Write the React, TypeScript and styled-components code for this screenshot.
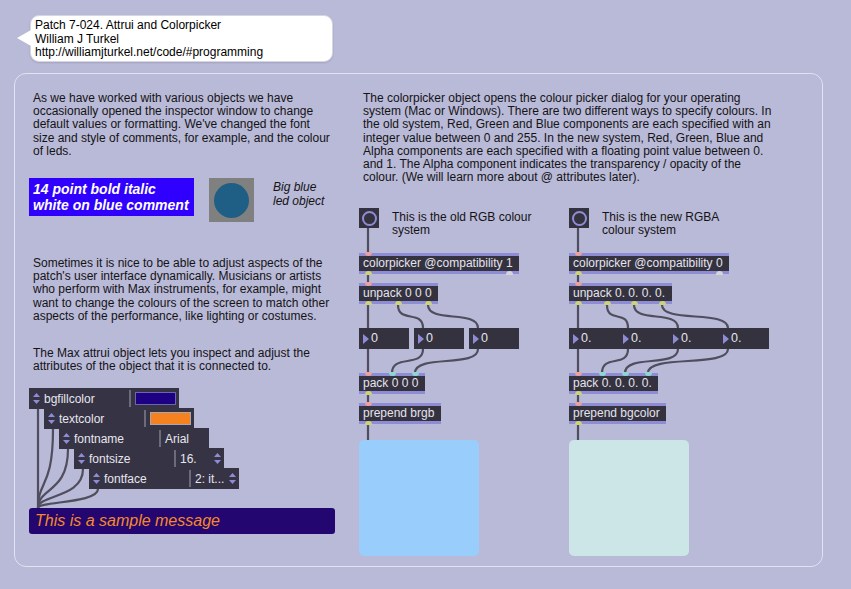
import React from 'react'
import styled, { createGlobalStyle } from 'styled-components'

const GlobalStyle = createGlobalStyle`
  html, body {
    margin: 0;
    padding: 0;
    background: #b9b9d8;
  }
  body {
    font-family: 'Liberation Sans', Arial, sans-serif;
    font-size: 12px;
    color: #141414;
  }
`

const LAV = '#8f8cd6'
const DARK = '#34323f'
const CORD = '#4f4e5e'

const Page = styled.div`
  width: 851px;
  height: 589px;
  overflow: hidden;
  padding-top: 15px;
  box-sizing: border-box;
`

const Bubble = styled.div`
  position: relative;
  margin-left: 30px;
  width: 303px;
  height: 47px;
  box-sizing: border-box;
  padding: 3px 4px 0;
  background: #fff;
  border: 1px solid #d6d6e2;
  border-radius: 9px;
  box-shadow: 0 1px 2px rgba(0, 0, 0, 0.12);
  line-height: 13.5px;
  color: #000;

  &::before {
    content: '';
    position: absolute;
    left: -14px;
    top: 14px;
    border-right: 14px solid #fff;
    border-top: 8px solid transparent;
    border-bottom: 8px solid transparent;
  }
`

const Panel = styled.div`
  margin: 11px 0 0 14px;
  width: 809px;
  height: 494px;
  box-sizing: border-box;
  border: 1px solid #e2e2f0;
  border-radius: 12px;
  padding: 18px 0 0 14px;
  display: flex;
`

const LeftCol = styled.div`
  width: 330px;
  display: flex;
  flex-direction: column;
`

const RightCol = styled.div`
  display: flex;
  flex-direction: column;
`

const Para = styled.p<{ $width: number; $top?: number }>`
  margin: ${(p) => p.$top || 0}px 0 0 0;
  padding-left: 4px;
  width: ${(p) => p.$width}px;
  line-height: 13.2px;
`

const CommentRow = styled.div`
  display: flex;
  align-items: flex-start;
  margin-top: 20px;
`

const BlueComment = styled.div`
  width: 165px;
  height: 38px;
  box-sizing: border-box;
  padding: 3px 4px;
  background: #3000ff;
  color: #fff;
  font-size: 14px;
  font-weight: bold;
  font-style: italic;
  line-height: 16px;
`

const LedBox = styled.div`
  margin-left: 15px;
  width: 45px;
  height: 44px;
  background: #808080;
  display: flex;
  align-items: center;
  justify-content: center;
`

const LedLight = styled.div`
  width: 35px;
  height: 35px;
  border-radius: 50%;
  background: #1f5f85;
`

const LedCaption = styled.div`
  margin-left: 19px;
  padding-top: 2px;
  font-style: italic;
  line-height: 14px;
`

/* patch canvas: nodes sit at their patcher coordinates */
const Canvas = styled.div<{ $w: number; $h: number; $top?: number }>`
  position: relative;
  width: ${(p) => p.$w}px;
  height: ${(p) => p.$h}px;
  margin-top: ${(p) => p.$top || 0}px;
  flex-shrink: 0;
`

const Cords = styled.svg`
  position: absolute;
  left: 0;
  top: 0;
  overflow: visible;
  pointer-events: none;
`

const Node = styled.div<{ $x: number; $y: number }>`
  position: absolute;
  left: ${(p) => p.$x}px;
  top: ${(p) => p.$y}px;
`

const ObjBox = styled(Node)<{ $w: number }>`
  width: ${(p) => p.$w}px;
  height: 21px;
  box-sizing: border-box;
  background: ${DARK};
  border-top: 3px solid ${LAV};
  border-bottom: 3px solid ${LAV};
  color: #e4e4ee;
  line-height: 15px;
  padding: 0 4px;
  white-space: nowrap;
`

const Port = styled.span<{ $x: number; $kind: 'hot' | 'cold' | 'out' | 'grey' }>`
  position: absolute;
  left: ${(p) => p.$x - 3}px;
  width: 7px;
  height: 4px;
  background: ${(p) =>
    p.$kind === 'hot' ? '#e9a2a0' : p.$kind === 'cold' ? '#8fd6d2' : p.$kind === 'out' ? '#cbd27a' : '#d4d4dc'};
  ${(p) =>
    p.$kind === 'out' || p.$kind === 'grey'
      ? 'bottom: -4px; border-radius: 4px 4px 0 0;'
      : 'top: -4px; border-radius: 0 0 4px 4px;'}
`

const NumBox = styled(Node)<{ $w: number }>`
  width: ${(p) => p.$w}px;
  height: 21px;
  background: ${DARK};
  color: #e4e4ee;
  display: flex;
  align-items: center;
  line-height: 21px;
  font-size: 12.5px;
`

const NumArrow = styled.span`
  margin: 0 2px 0 4px;
  width: 0;
  height: 0;
  border-left: 6px solid ${LAV};
  border-top: 5px solid transparent;
  border-bottom: 5px solid transparent;
`

const Toggle = styled(Node)`
  width: 20px;
  height: 20px;
  background: ${DARK};
  display: flex;
  align-items: center;
  justify-content: center;
`

const ToggleRing = styled.div`
  width: 11px;
  height: 11px;
  border-radius: 50%;
  border: 2px solid ${LAV};
`

const PatchNote = styled(Node)<{ $w: number }>`
  width: ${(p) => p.$w}px;
  line-height: 13px;
`

const Swatch = styled(Node)<{ $color: string }>`
  width: 120px;
  height: 116px;
  border-radius: 5px;
  background: ${(p) => p.$color};
`

const PatchRow = styled.div`
  display: flex;
  gap: 10px;
  margin-top: 24px;
`

const AttrBox = styled(Node)`
  width: 150px;
  height: 21px;
  background: #363444;
  color: #e6e6ef;
  display: flex;
  align-items: center;
`

const AttrLabel = styled.span`
  width: 85px;
  margin-left: 4px;
`

const AttrDivider = styled.span`
  width: 2px;
  height: 17px;
  background: #6c6b7c;
`

const AttrValue = styled.span`
  flex: 1;
  display: flex;
  align-items: center;
  justify-content: space-between;
  padding: 0 3px 0 4px;
`

const ColorChip = styled.span<{ $color: string; $edge: string }>`
  width: 41px;
  height: 13px;
  box-sizing: border-box;
  border: 1px solid ${(p) => p.$edge};
  background: ${(p) => p.$color};
`

const Message = styled(Node)`
  width: 306px;
  height: 26px;
  box-sizing: border-box;
  border-radius: 3px;
  background: #23066f;
  color: #f5892a;
  font-size: 16px;
  font-style: italic;
  line-height: 26px;
  padding-left: 6px;
`

const Updown: React.FC<{ left?: number }> = ({ left = 4 }) => (
  <svg width="7" height="11" viewBox="0 0 7 11" style={{ marginLeft: left, flexShrink: 0 }}>
    <path d="M3.5 0 L7 4 L0 4 Z M0 7 L7 7 L3.5 11 Z" fill={LAV} />
  </svg>
)

const cord = (x1: number, y1: number, x2: number, y2: number) => {
  if (x1 === x2) return `M${x1} ${y1} V${y2}`
  const d = (y2 - y1) * 0.8
  return `M${x1} ${y1} C${x1} ${y1 + d} ${x2} ${y2 - d} ${x2} ${y2}`
}

type PatchProps = {
  note: string
  noteWidth: number
  compat: string
  unpack: string
  unpackW: number
  outlets: number[]
  nums: { x: number; w: number; label: string }[]
  pack: string
  packW: number
  inlets: number[]
  prepend: string
  prependW: number
  color: string
}

const ColourPatch: React.FC<PatchProps> = (p) => {
  const numIns = p.nums.map((n) => n.x + 9)
  const paths = [
    cord(9, 20, 9, 45),
    cord(9, 66, 9, 75),
    ...p.outlets.map((o, i) => cord(o, 97, numIns[i], 120)),
    ...numIns.map((n, i) => cord(n, 141, p.inlets[i], 165)),
    cord(9, 186, 9, 195),
    cord(9, 216, 9, 232),
  ]
  return (
    <Canvas $w={200} $h={348}>
      <Cords width="200" height="348">
        {paths.map((d, i) => (
          <path key={i} d={d} stroke={CORD} strokeWidth={2.2} fill="none" />
        ))}
      </Cords>
      <Toggle $x={0} $y={0}>
        <ToggleRing />
      </Toggle>
      <PatchNote $x={33} $y={3} $w={p.noteWidth}>
        {p.note}
      </PatchNote>
      <ObjBox $x={0} $y={45} $w={160}>
        <Port $x={9} $kind="hot" />
        colorpicker @compatibility {p.compat}
        <Port $x={9} $kind="out" />
        <Port $x={150} $kind="grey" />
      </ObjBox>
      <ObjBox $x={0} $y={75} $w={p.unpackW}>
        <Port $x={9} $kind="hot" />
        {p.unpack}
        {p.outlets.map((o) => (
          <Port key={o} $x={o} $kind="out" />
        ))}
      </ObjBox>
      {p.nums.map((n) => (
        <NumBox key={n.x} $x={n.x} $y={120} $w={n.w}>
          <NumArrow />
          {n.label}
        </NumBox>
      ))}
      <ObjBox $x={0} $y={165} $w={p.packW}>
        {p.inlets.map((x, i) => (
          <Port key={x} $x={x} $kind={i === 0 ? 'hot' : 'cold'} />
        ))}
        {p.pack}
        <Port $x={9} $kind="out" />
      </ObjBox>
      <ObjBox $x={0} $y={195} $w={p.prependW}>
        <Port $x={9} $kind="hot" />
        {p.prepend}
        <Port $x={9} $kind="out" />
      </ObjBox>
      <Swatch $x={0} $y={232} $color={p.color} />
    </Canvas>
  )
}

const attrRows = [
  { label: 'bgfillcolor', value: <ColorChip $color="#1e0082" $edge="#6a66b0" /> },
  { label: 'textcolor', value: <ColorChip $color="#f5821f" $edge="#a8a8b4" /> },
  { label: 'fontname', value: <span>Arial</span> },
  {
    label: 'fontsize',
    value: (
      <>
        <span>16.</span>
        <Updown left={0} />
      </>
    ),
  },
  {
    label: 'fontface',
    value: (
      <>
        <span>2: it...</span>
        <Updown left={0} />
      </>
    ),
  },
]

const AttruiPatch: React.FC = () => {
  const paths = attrRows.map((_, i) => {
    const x = 9 + i * 15
    const y = 21 + i * 20
    if (i === 0) return `M9 ${y} V120`
    return `M${x} ${y} C${x} ${y + (120 - y) * 0.75} 9 ${120 - (120 - y) * 0.35} 9 120`
  })
  return (
    <Canvas $w={310} $h={146} $top={15}>
      <Cords width="310" height="146">
        {paths.map((d, i) => (
          <path key={i} d={d} stroke={CORD} strokeWidth={2.2} fill="none" />
        ))}
      </Cords>
      {attrRows.map((r, i) => (
        <AttrBox key={r.label} $x={i * 15} $y={i * 20}>
          <Updown />
          <AttrLabel>{r.label}</AttrLabel>
          <AttrDivider />
          <AttrValue>{r.value}</AttrValue>
        </AttrBox>
      ))}
      <Message $x={0} $y={120}>
        This is a sample message
      </Message>
    </Canvas>
  )
}

const App: React.FC = () => (
  <Page>
    <GlobalStyle />
    <Bubble>
      Patch 7-024. Attrui and Colorpicker
      <br />
      William J Turkel
      <br />
      http://williamjturkel.net/code/#programming
    </Bubble>
    <Panel>
      <LeftCol>
        <Para $width={300}>
          As we have worked with various objects we have occasionally opened the inspector window to change default
          values or formatting. We've changed the font size and style of comments, for example, and the colour of leds.
        </Para>
        <CommentRow>
          <BlueComment>
            14 point bold italic
            <br />
            white on blue comment
          </BlueComment>
          <LedBox>
            <LedLight />
          </LedBox>
          <LedCaption>
            Big blue
            <br />
            led object
          </LedCaption>
        </CommentRow>
        <Para $width={300} $top={35}>
          Sometimes it is nice to be able to adjust aspects of the patch's user interface dynamically. Musicians or
          artists who perform with Max instruments, for example, might want to change the colours of the screen to
          match other aspects of the performance, like lighting or costumes.
        </Para>
        <Para $width={300} $top={24}>
          The Max attrui object lets you inspect and adjust the attributes of the object that it is connected to.
        </Para>
        <AttruiPatch />
      </LeftCol>
      <RightCol>
        <Para $width={414}>
          The colorpicker object opens the colour picker dialog for your operating system (Mac or Windows). There are
          two different ways to specify colours. In the old system, Red, Green and Blue components are each specified
          with an integer value between 0 and 255. In the new system, Red, Green, Blue and Alpha components are each
          specified with a floating point value between 0. and 1. The Alpha component indicates the transparency /
          opacity of the colour. (We will learn more about @ attributes later).
        </Para>
        <PatchRow>
          <ColourPatch
            note="This is the old RGB colour system"
            noteWidth={145}
            compat="1"
            unpack="unpack 0 0 0"
            unpackW={79}
            outlets={[9, 39, 69]}
            nums={[
              { x: 0, w: 50, label: '0' },
              { x: 55, w: 50, label: '0' },
              { x: 110, w: 50, label: '0' },
            ]}
            pack="pack 0 0 0"
            packW={66}
            inlets={[9, 33, 56]}
            prepend="prepend brgb"
            prependW={82}
            color="#99cdfb"
          />
          <ColourPatch
            note="This is the new RGBA colour system"
            noteWidth={125}
            compat="0"
            unpack="unpack 0. 0. 0. 0."
            unpackW={103}
            outlets={[9, 38, 65, 93]}
            nums={[
              { x: 0, w: 50, label: '0.' },
              { x: 50, w: 50, label: '0.' },
              { x: 100, w: 50, label: '0.' },
              { x: 150, w: 50, label: '0.' },
            ]}
            pack="pack 0. 0. 0. 0."
            packW={89}
            inlets={[9, 33, 56, 79]}
            prepend="prepend bgcolor"
            prependW={97}
            color="#cce5e6"
          />
        </PatchRow>
      </RightCol>
    </Panel>
  </Page>
)

export default App
